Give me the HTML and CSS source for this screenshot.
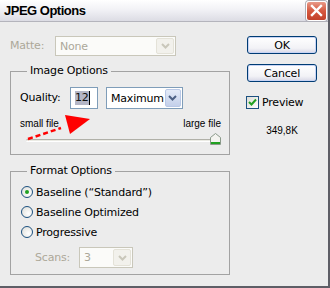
FILE: index.html
```html
<!DOCTYPE html>
<html lang="en">
  <head>
    <meta charset="UTF-8" />
    <title>JPEG Options</title>
    <link rel="stylesheet" href="styles.css">
  </head>
  <body>
    <div class="window">
      <div class="titlebar">
        <span class="title">JPEG Options</span>
        <span class="close">
          <svg width="13" height="13" viewBox="0 0 13 13">
            <path d="M2 2 L11 11 M11 2 L2 11" stroke="#fff" stroke-width="2.4" stroke-linecap="square" />
          </svg>
        </span>
      </div>

      <div class="content">
        <div class="main">
          <div class="matte-row">
            <span class="label disabled">Matte:</span>
            <div class="combo combo-disabled matte">
              <span class="value">None</span>
              <span class="drop">
                <svg width="9" height="6" viewBox="0 0 9 6"><path d="M1 1 L4.5 4.5 L8 1" fill="none" stroke="#c9c7ba" stroke-width="2" /></svg>
              </span>
            </div>
          </div>

          <fieldset class="group image-opts">
            <legend>Image Options</legend>
            <div class="quality-row">
              <span class="label quality-label">Quality:</span>
              <div class="textbox"><span class="selected">12</span><span class="caret"></span></div>
              <div class="combo quality-combo">
                <span class="value">Maximum</span>
                <span class="drop">
                  <svg width="9" height="6" viewBox="0 0 9 6"><path d="M1 1 L4.5 4.5 L8 1" fill="none" stroke="#4d6185" stroke-width="2" /></svg>
                </span>
              </div>
            </div>
            <div class="size-labels">
              <span>small file</span>
              <span>large file</span>
            </div>
            <div class="slider">
              <div class="track"></div>
              <svg class="thumb" width="11" height="12" viewBox="0 0 11 12">
                <path d="M0.5 11.5 V4.5 L5.5 0.5 L10.5 4.5 V11.5 Z" fill="#f4f4f0" stroke="#8a9a8a" />
                <path d="M1 10 H10" stroke="#21a121" stroke-width="2" />
              </svg>
            </div>
          </fieldset>

          <fieldset class="group format-opts">
            <legend>Format Options</legend>
            <div class="radio-row">
              <span class="radio checked"></span>
              <span>Baseline (“Standard”)</span>
            </div>
            <div class="radio-row">
              <span class="radio"></span>
              <span>Baseline Optimized</span>
            </div>
            <div class="radio-row">
              <span class="radio"></span>
              <span>Progressive</span>
            </div>
            <div class="scans-row">
              <span class="label disabled scans-label">Scans:</span>
              <div class="combo combo-disabled scans">
                <span class="value">3</span>
                <span class="drop">
                  <svg width="9" height="6" viewBox="0 0 9 6"><path d="M1 1 L4.5 4.5 L8 1" fill="none" stroke="#c9c7ba" stroke-width="2" /></svg>
                </span>
              </div>
            </div>
          </fieldset>
        </div>

        <div class="side">
          <button class="btn">OK</button>
          <button class="btn cancel">Cancel</button>
          <div class="check-row">
            <span class="checkbox">
              <svg width="9" height="9" viewBox="0 0 9 9"><path d="M1 4 L3.5 6.5 L8 1.5" fill="none" stroke="#21a121" stroke-width="2" /></svg>
            </span>
            <span>Preview</span>
          </div>
          <div class="file-size">349,8K</div>
        </div>
      </div>

      <!-- red hand-drawn hint over the slider -->
      <svg class="annotation" width="330" height="288" viewBox="0 0 330 288">
        <path d="M28 139 L61 128" stroke="#f00" stroke-width="2.5" stroke-dasharray="5 3" fill="none" />
        <polygon points="65,115 90,119 70,134" fill="#f00" />
      </svg>
    </div>
  </body>
</html>
```

FILE: styles.css
```css
body {
  margin: 0;
  padding: 0;
  background: #ececec;
  font-family: "DejaVu Sans", Verdana, sans-serif;
  font-size: 11px;
  letter-spacing: -0.2px;
  color: #000;
}

.window {
  position: relative;
  width: 330px;
  height: 288px;
  box-sizing: border-box;
  background: #ececec;
  border-right: 2px solid #5e5e66;
  border-bottom: 2px solid #5e5e66;
}

.titlebar {
  height: 22px;
  box-sizing: border-box;
  display: flex;
  align-items: center;
  justify-content: space-between;
  padding: 0 1px 0 4px;
  background: linear-gradient(to bottom, #ffffff, #f2f2f6 45%, #dcdce4);
  border-bottom: 1px solid #b4b4bc;
}

.title {
  font-family: "Liberation Sans", Arial, sans-serif;
  font-weight: bold;
  font-size: 13px;
  letter-spacing: -0.5px;
  color: #000;
}

.close {
  width: 21px;
  height: 20px;
  box-sizing: border-box;
  display: flex;
  align-items: center;
  justify-content: center;
  border: 1px solid #fff;
  border-radius: 3px;
  background: linear-gradient(to bottom, #e89a88, #d6583f 50%, #c2412a);
  box-shadow: 0 0 0 1px #b0b0b8;
}

.content {
  display: flex;
}

.main {
  width: 220px;
  margin-left: 10px;
}

.label {
  line-height: 20px;
}

.disabled {
  color: #aca899;
}

.matte-row {
  display: flex;
  align-items: center;
  margin-top: 14px;
  height: 20px;
}

.matte-row .label {
  width: 45px;
}

.combo {
  display: flex;
  align-items: center;
  box-sizing: border-box;
  border: 1px solid #7f9db9;
  background: #fff;
}

.combo .value {
  flex: 1;
  padding-left: 4px;
}

.combo .drop {
  align-self: stretch;
  width: 16px;
  margin: 1px;
  display: flex;
  align-items: center;
  justify-content: center;
  border: 1px solid #b9c8e6;
  border-radius: 2px;
  background: linear-gradient(to bottom, #e4ebf8, #c4d0ea);
}

.combo-disabled {
  border-color: #c9c7ba;
  background: #fbfbf9;
  color: #aca899;
}

.combo-disabled .drop {
  border-color: #e4e2d8;
  background: #f2f1ec;
}

.matte {
  width: 121px;
  height: 20px;
}

.group {
  margin: 0;
  padding: 9px 8px 9px 9px;
  border: 1px solid #a2a2a2;
  min-width: 0;
}

.group legend {
  margin-left: 7px;
  padding: 0 3px;
  line-height: 14px;
  font-size: 11px;
}

.image-opts {
  margin-top: 8px;
}

.quality-row {
  display: flex;
  align-items: center;
  height: 22px;
}

.quality-label {
  width: 50px;
}

.textbox {
  width: 28px;
  height: 22px;
  box-sizing: border-box;
  border: 1px solid #7f9db9;
  background: #fff;
  display: flex;
  align-items: center;
  padding-left: 4px;
}

.selected {
  background: #b4b6c6;
  color: #111;
  line-height: 14px;
}

.caret {
  width: 1px;
  height: 14px;
  background: #000;
}

.quality-combo {
  width: 77px;
  height: 22px;
  margin-left: 8px;
}

.size-labels {
  display: flex;
  justify-content: space-between;
  margin-top: 9px;
  height: 12px;
  line-height: 12px;
  font-family: "Liberation Sans", Arial, sans-serif;
  font-size: 10px;
  letter-spacing: 0;
}

.slider {
  position: relative;
  height: 15px;
  padding: 0 5px 0 6px;
}

.track {
  position: relative;
  top: 9px;
  height: 3px;
  box-sizing: border-box;
  border-top: 1px solid #b0b0a8;
  border-bottom: 1px solid #fff;
  background: #ebebe4;
  border-radius: 2px;
}

.thumb {
  position: absolute;
  top: 3px;
  right: 0;
}

.format-opts {
  margin-top: 9px;
  padding-top: 4px;
  padding-bottom: 6px;
}

.radio-row {
  display: flex;
  align-items: center;
  gap: 3px;
  height: 20px;
  padding-left: 1px;
}

.radio {
  width: 12px;
  height: 12px;
  box-sizing: border-box;
  border-radius: 50%;
  border: 1px solid #1c5180;
  background: radial-gradient(circle at 65% 65%, #ffffff, #dcdcd6);
  display: flex;
  align-items: center;
  justify-content: center;
}

.radio.checked::after {
  content: "";
  width: 4px;
  height: 4px;
  border-radius: 50%;
  background: #21a121;
}

.scans-row {
  display: flex;
  align-items: center;
  margin-top: 5px;
  height: 21px;
  padding-left: 15px;
}

.scans-label {
  width: 44px;
}

.scans {
  width: 54px;
  height: 21px;
}

.side {
  margin-left: 17px;
  width: 70px;
  padding-top: 14px;
  display: flex;
  flex-direction: column;
}

.btn {
  width: 70px;
  height: 18px;
  padding: 0;
  font-family: inherit;
  font-size: 11px;
  letter-spacing: inherit;
  color: #000;
  border: 1px solid #003c74;
  border-radius: 3px;
  background: linear-gradient(to bottom, #ffffff, #f2f2f6 70%, #d8d8e6);
  box-shadow: inset 0 0 0 1px #c8d4f4;
}

.cancel {
  margin-top: 10px;
}

.check-row {
  display: flex;
  align-items: center;
  gap: 3px;
  margin-top: 14px;
  margin-left: -1px;
  height: 13px;
}

.checkbox {
  width: 13px;
  height: 13px;
  box-sizing: border-box;
  border: 1px solid #1c5180;
  background: linear-gradient(135deg, #dcdcd6, #ffffff);
  display: flex;
  align-items: center;
  justify-content: center;
}

.file-size {
  margin-top: 16px;
  line-height: 12px;
  font-family: "Liberation Sans", Arial, sans-serif;
  font-size: 10px;
  letter-spacing: 0;
  text-align: center;
}

.annotation {
  position: absolute;
  left: 0;
  top: 0;
  pointer-events: none;
}
```
